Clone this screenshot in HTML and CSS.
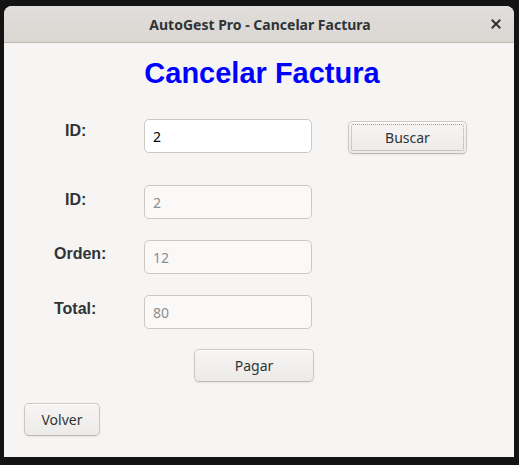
FILE: index.html
```html
<!DOCTYPE html>
<html lang="es">
<head>
<meta charset="utf-8">
<title>AutoGest Pro - Cancelar Factura</title>
<link rel="stylesheet" href="styles.css">
</head>
<body>
<div class="window">
  <header class="titlebar">
    <span class="title">AutoGest Pro - Cancelar Factura</span>
    <button class="close" aria-label="Cerrar">
      <svg width="10" height="10" viewBox="0 0 10 10"><path d="M1.5 1.5 L8.5 8.5 M8.5 1.5 L1.5 8.5" stroke="#2e3436" stroke-width="2" stroke-linecap="square"/></svg>
    </button>
  </header>
  <main class="content">
    <h1 class="heading">Cancelar Factura</h1>
    <div class="row row-search">
      <label class="label label-id lm3">ID:</label>
      <input class="field" type="text" value="2">
      <button class="btn btn-buscar">Buscar</button>
    </div>
    <div class="row row-2">
      <label class="label label-id lm6">ID:</label>
      <input class="field" type="text" value="2" disabled>
    </div>
    <div class="row row-3">
      <label class="label lm5">Orden:</label>
      <input class="field" type="text" value="12" disabled>
    </div>
    <div class="row row-3">
      <label class="label lm5">Total:</label>
      <input class="field" type="text" value="80" disabled>
    </div>
    <div class="row-pagar">
      <button class="btn btn-pagar">Pagar</button>
    </div>
    <div class="row-volver">
      <button class="btn btn-volver">Volver</button>
    </div>
  </main>
</div>
</body>
</html>
```

FILE: styles.css
```css
html, body {
  margin: 0;
  padding: 0;
  background: #131313;
  width: 519px;
  height: 465px;
  overflow: hidden;
}

.window {
  margin: 6px 0 0 4px;
  width: 510px;
  height: 451px;
  background: #f6f5f4;
  border-radius: 8px 8px 0 0;
  overflow: hidden;
  display: flex;
  flex-direction: column;
}

.titlebar {
  height: 36px;
  flex: none;
  background: linear-gradient(to bottom, #e1dedb, #dad6d2);
  border-bottom: 1px solid #bfb8b1;
  display: flex;
  align-items: center;
  justify-content: center;
  position: relative;
}

.title {
  font-family: "Noto Sans", sans-serif;
  font-weight: 700;
  font-size: 14px;
  color: #2e3436;
  padding-left: 2px;
}

.close {
  position: absolute;
  right: 13px;
  top: 13px;
  width: 10px;
  height: 10px;
  padding: 0;
  border: 0;
  background: transparent;
  display: flex;
}

.content {
  flex: 1;
  position: relative;
}

.heading {
  margin: 14px 0 0 0;
  padding-left: 6px;
  text-align: center;
  font-family: "Liberation Sans", Arial, sans-serif;
  font-weight: 700;
  font-size: 29px;
  line-height: 33px;
  color: #0000ff;
}

.row {
  display: flex;
  align-items: flex-start;
  padding-left: 50px;
}

.row-search { margin-top: 29px; }
.row-2 { margin-top: 31px; }
.row-3 { margin-top: 21px; }

.label {
  width: 90px;
  flex: none;
  box-sizing: border-box;
  font-family: "Liberation Sans", Arial, sans-serif;
  font-weight: 700;
  font-size: 16px;
  line-height: 18px;
  color: #2e3436;
}

.label-id { padding-left: 11px; }
.lm3 { margin-top: 3px; }
.lm5 { margin-top: 5px; }
.lm6 { margin-top: 6px; }

.field {
  width: 168px;
  height: 34px;
  box-sizing: border-box;
  margin: 0;
  border: 1px solid #cdc7c2;
  border-radius: 5px;
  background: #ffffff;
  padding: 0 8px;
  font-family: "Noto Sans", sans-serif;
  font-size: 14px;
  color: #000000;
  outline: none;
}

.field:disabled {
  background: #faf9f8;
  color: #8b8e8f;
}

.btn {
  box-sizing: border-box;
  height: 33px;
  margin: 0;
  padding: 0;
  border: 1px solid #cdc7c2;
  border-bottom-color: #bfb8b1;
  border-radius: 5px;
  background: linear-gradient(to top, #edebe9, #f6f5f4);
  box-shadow: inset 0 1px #ffffff, 0 1px 2px rgba(0, 0, 0, 0.07);
  font-family: "Noto Sans", sans-serif;
  font-size: 14px;
  color: #2e3436;
}

.btn-buscar {
  width: 119px;
  margin-left: 36px;
  margin-top: 2px;
  outline: 1px dotted rgba(46, 52, 54, 0.4);
  outline-offset: -4px;
}

.row-pagar {
  margin-top: 20px;
  padding-left: 190px;
}

.btn-pagar { width: 120px; }

.row-volver {
  margin-top: 21px;
  padding-left: 20px;
}

.btn-volver { width: 76px; }
```
